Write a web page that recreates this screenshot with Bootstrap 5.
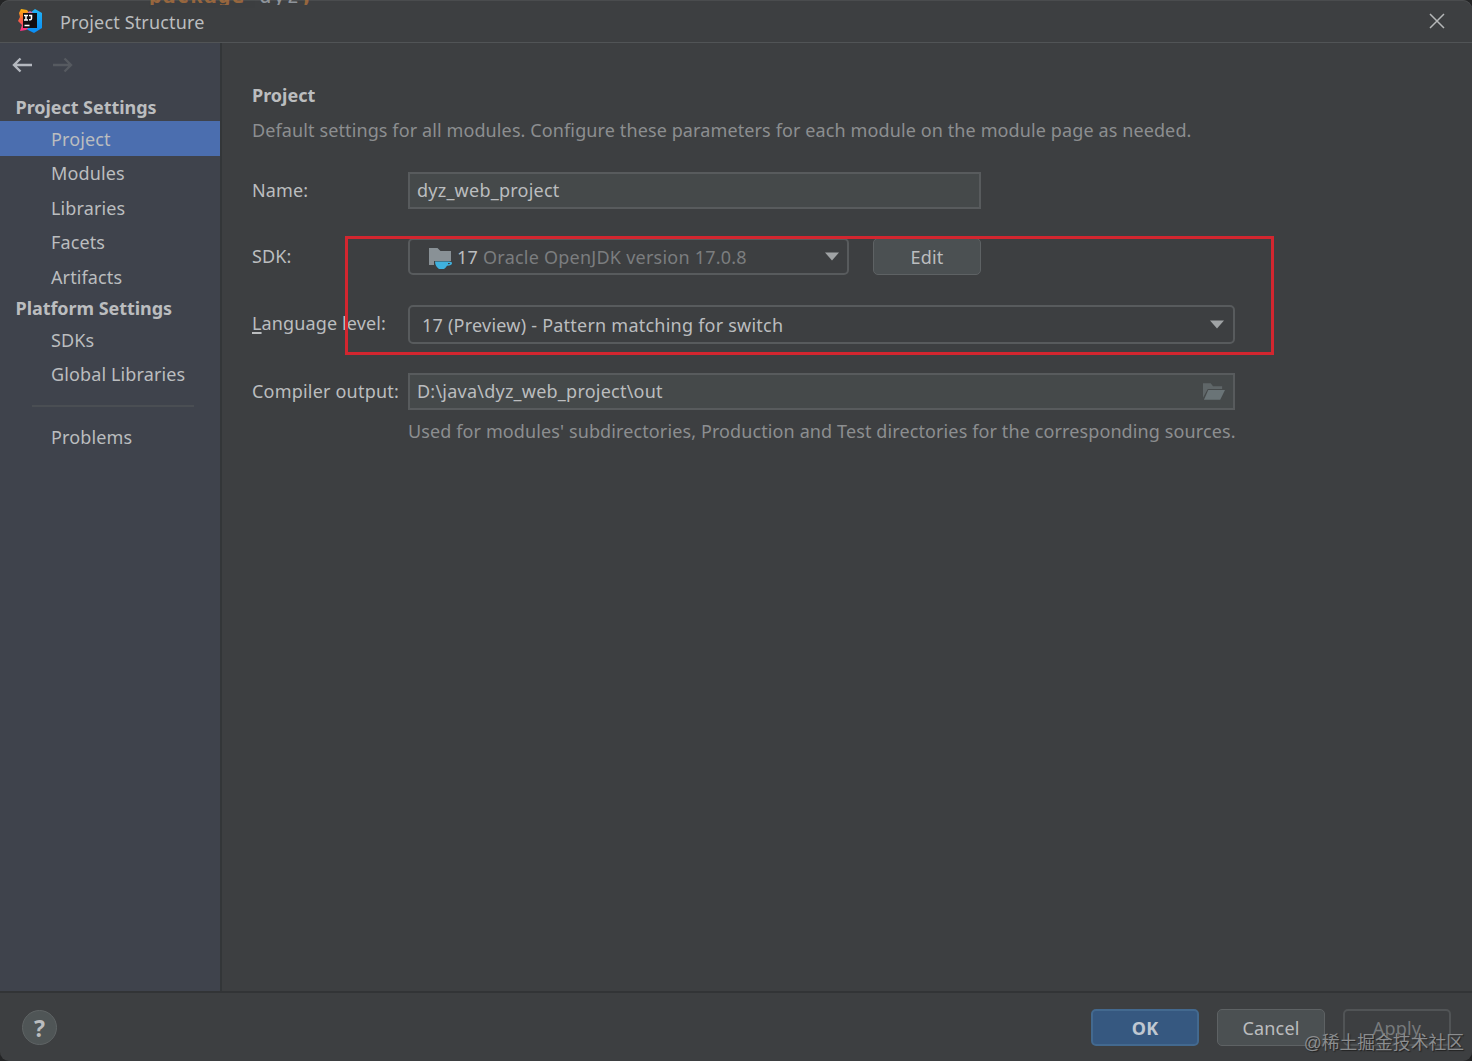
<!DOCTYPE html>
<html lang="en" data-bs-theme="dark">
<head>
<meta charset="utf-8">
<title>Project Structure</title>
<link href="https://cdn.jsdelivr.net/npm/bootstrap@5.3.0/dist/css/bootstrap.min.css" rel="stylesheet">
<style>
  html, body { height: 100%; }
  body { background: #242526; color: #bbbdbf; font-family: "Noto Sans", "Noto Sans CJK SC", sans-serif; font-size: 18px; line-height: 24px; overflow: hidden; white-space: nowrap; }
  svg { display: block; flex: none; }
  .dialog-window { height: 1061px; background: #3d3f41; border-radius: 9px; box-shadow: inset 0 1px 0 #4a4c4e; }
  .title-strip { height: 43px; border-bottom: 1px solid #515456; padding: 0 27px 0 17px; }
  .title-text { padding: 2px 0 0 17px; letter-spacing: .15px; }
  .code-behind { left: 149px; top: 0; height: 5px; width: 170px; overflow: hidden; opacity: .75; }
  .code-behind span { display: block; margin-top: -13px; font: 700 21px/18px "DejaVu Sans Mono", monospace; color: #b5733c; letter-spacing: 1.1px; }
  .code-behind i { font-style: normal; font-weight: 400; color: #a9b0b8; }
  .side-pane { width: 222px; background: #3f434c; border-right: 2px solid #333638; }
  .nav-arrows { height: 49.5px; padding: 11px 0 0 12px; gap: 20px; }
  .side-heading { height: 28.5px; line-height: 29px; padding-left: 15.5px; font-weight: 700; letter-spacing: -.05px; }
  .side-item { height: 34.5px; line-height: 34.5px; padding: 0 0 0 51px; border-radius: 0; color: #bbbdbf; letter-spacing: .12px; }
  .side-item.active { background: #4b6eaf; height: 35px; line-height: 36px; }
  .side-rule { height: 2px; margin: 13px 26px 13px 32px; background: #4a4e53; }
  .main-pane { padding: 40px 0 0 30px; }
  .hint-text { color: #8c8e90; letter-spacing: .112px; }
  .module-note { margin: 11px 0 30px; }
  .output-note { margin: 9px 0 0 156px; }
  .form-key { width: 156px; flex: none; letter-spacing: .13px; padding-bottom: 2px; }
  .form-key.roomy { letter-spacing: .2px; }
  .form-key u { text-underline-offset: 2px; text-decoration-thickness: 2px; text-decoration-skip-ink: none; }
  .form-lines { gap: 29px; }
  .field, .combo { letter-spacing: .23px; }
  .field { height: 37px; border: 2px solid #585b5d; background: #45494a; padding: 0 8px 0 7px; }
  .field > span { padding-bottom: 2px; }
  .combo { height: 37px; border: 2px solid #585b5d; border-radius: 5px; padding: 0 9px 0 12px; }
  .tall { height: 39px; margin-top: 1px; }
  .w-name { width: 573px; }
  .w-sdk { width: 441px; padding: 0 8px 0 18px; }
  .w-wide { width: 827px; }
  .sdk-version { color: #7b7d7f; padding-left: 5px; }
  .push-btn { width: 108px; height: 37px; border: 1px solid #5e6264; border-radius: 5px; background: #4b5052; color: #bbbdbf; font-size: 18px; line-height: 24px; padding: 1px 0 0; letter-spacing: .2px; }
  .push-btn.ok { background: #365880; border: 2px solid #43698f; font-weight: 700; color: #c0c8d2; }
  .push-btn.off { background: transparent; color: #777a7c; border: 2px solid #515456; }
  .bottom-strip { height: 70px; border-top: 2px solid #323436; padding: 1px 21px 0 22px; }
  .bottom-buttons { gap: 18px; }
  .help-btn { width: 35px; height: 35px; border-radius: 50%; background: #4f5556; border: 1px solid #5f6465; font-weight: 700; font-size: 23px; }
  .callout-frame { left: 345px; top: 236px; width: 929px; height: 119px; border: 3px solid #d3262f; pointer-events: none; }
  .stamp { right: 8px; bottom: 6px; font: 17.8px/24px "Liberation Sans", "Noto Sans CJK SC", sans-serif; color: #8b8d8f; text-shadow: 1px 1px 1px #222; }
</style>
</head>
<body>
<div class="dialog-window d-flex flex-column position-relative overflow-hidden">
  <header class="title-strip d-flex align-items-center flex-shrink-0">
    <svg width="26" height="26" viewBox="0 0 26 26">
      <defs>
        <linearGradient id="warm" x1="0" y1="0" x2="0" y2="1"><stop offset="0" stop-color="#fdb60d"/><stop offset=".45" stop-color="#f7653c"/><stop offset="1" stop-color="#fe2d8b"/></linearGradient>
        <linearGradient id="cool" x1="0" y1="0" x2="0" y2="1"><stop offset="0" stop-color="#22b4f5"/><stop offset="1" stop-color="#0a8cf5"/></linearGradient>
      </defs>
      <path fill="url(#cool)" d="M13 5L18 1l7 4v15l-8 5-8-4z"/>
      <path fill="url(#warm)" d="M4 1l6 1 4 5v11l-5 4-6 1 2-6-4-4 2-4-1-4z"/>
      <path fill="#c86bb4" d="M10 5l3-2 5 3H9z"/>
      <path fill="#120f12" d="M6 5h14v15H6z"/>
      <path fill="none" stroke="#fff" stroke-width="1.5" d="M7 7.500h4M9 7.500v4.500M7 12h4M12 7.500h2.500v3q0 1.500-2.500 1.300M7.500 17.500h5"/>
    </svg>
    <span class="title-text">Project Structure</span>
    <svg class="ms-auto" width="16" height="16" viewBox="0 0 16 16"><path stroke="#b5b7b8" stroke-width="1.500" d="M1 1l14 14M15 1L1 15"/></svg>
  </header>
  <div class="code-behind position-absolute"><span>package <i>dyz</i>;</span></div>

  <div class="d-flex flex-grow-1">
    <nav class="side-pane flex-shrink-0">
      <div class="nav-arrows d-flex">
        <svg width="21" height="22" viewBox="0 0 21 22"><path fill="none" stroke="#b4b8bf" stroke-width="2.400" d="M20 11H2M8.500 4.500L2 11l6.500 6.500"/></svg>
        <svg width="21" height="22" viewBox="0 0 21 22"><path fill="none" stroke="#565a60" stroke-width="2.400" d="M0 11h18M11.500 4.500L18 11l-6.500 6.500"/></svg>
      </div>
      <div class="side-heading">Project Settings</div>
      <div class="nav flex-column">
        <a class="nav-link side-item active">Project</a>
        <a class="nav-link side-item">Modules</a>
        <a class="nav-link side-item">Libraries</a>
        <a class="nav-link side-item">Facets</a>
        <a class="nav-link side-item">Artifacts</a>
      </div>
      <div class="side-heading">Platform Settings</div>
      <div class="nav flex-column">
        <a class="nav-link side-item">SDKs</a>
        <a class="nav-link side-item">Global Libraries</a>
      </div>
      <div class="side-rule"></div>
      <a class="nav-link side-item">Problems</a>
    </nav>

    <main class="main-pane flex-grow-1">
      <div class="fw-bold">Project</div>
      <div class="hint-text module-note">Default settings for all modules. Configure these parameters for each module on the module page as needed.</div>
      <div class="form-lines d-flex flex-column">
        <div class="d-flex align-items-center">
          <div class="form-key">Name:</div>
          <div class="field w-name d-flex align-items-center"><span>dyz_web_project</span></div>
        </div>
        <div class="d-flex align-items-center">
          <div class="form-key">SDK:</div>
          <div class="combo w-sdk d-flex align-items-center">
            <svg class="me-1" width="25" height="24" viewBox="0 0 25 24">
              <path fill="#899196" d="M1 3h8.500l3 3H23v10H6v4H1z"/>
              <path fill="#3fb1de" fill-rule="evenodd" d="M7 16.500h12.500q4.500-.5 4.500 1.700 0 2.300-5 2.600-1 1.700-3 3.200h-5Q7.200 21.500 7 16.500zM20 18v1.300q2.300 0 2.300-.8 0-.6-2.300-.5z"/>
            </svg>
            <span>17</span><span class="sdk-version">Oracle OpenJDK version 17.0.8</span>
            <svg class="ms-auto" width="14" height="9" viewBox="0 0 14 9"><path fill="#a0a3a5" d="M0 .500h14L7 8.500z"/></svg>
          </div>
          <button class="btn push-btn ms-4">Edit</button>
        </div>
        <div class="d-flex align-items-center">
          <div class="form-key"><u>L</u>anguage level:</div>
          <div class="combo tall w-wide d-flex align-items-center">
            <span>17 (Preview) - Pattern matching for switch</span>
            <svg class="ms-auto" width="14" height="9" viewBox="0 0 14 9"><path fill="#a0a3a5" d="M0 .500h14L7 8.500z"/></svg>
          </div>
        </div>
        <div class="d-flex align-items-center">
          <div class="form-key roomy">Compiler output:</div>
          <div class="field w-wide d-flex align-items-center">
            <span>D:\java\dyz_web_project\out</span>
            <svg class="ms-auto" width="22" height="17" viewBox="0 0 23 17">
              <path fill="#5f6668" d="M0 0h8l2.500 3H20v3H5L0 15z"/>
              <path fill="#6a7477" d="M5.500 7H23l-5 10H1z"/>
            </svg>
          </div>
        </div>
      </div>
      <div class="hint-text output-note">Used for modules' subdirectories, Production and Test directories for the corresponding sources.</div>
    </main>
  </div>

  <footer class="bottom-strip d-flex align-items-center flex-shrink-0">
    <div class="help-btn d-flex align-items-center justify-content-center">?</div>
    <div class="bottom-buttons d-flex ms-auto">
      <button class="btn push-btn ok">OK</button>
      <button class="btn push-btn">Cancel</button>
      <button class="btn push-btn off">Apply</button>
    </div>
  </footer>
  <div class="callout-frame position-absolute"></div>
  <div class="stamp position-absolute">@稀土掘金技术社区</div>
</div>
<script src="https://cdn.jsdelivr.net/npm/bootstrap@5.3.0/dist/js/bootstrap.bundle.min.js"></script>
</body>
</html>
